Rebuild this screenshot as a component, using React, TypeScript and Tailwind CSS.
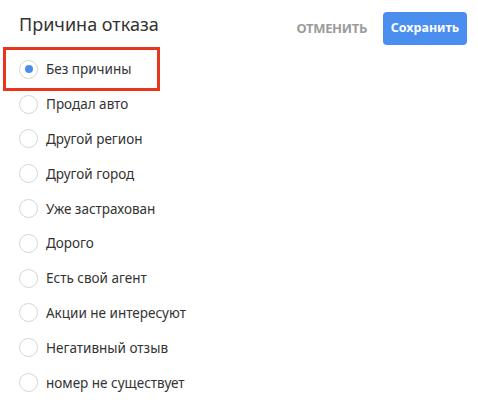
import React from 'react';

const reasons = [
    "Без причины",
    "Продал авто",
    "Другой регион",
    "Другой город",
    "Уже застрахован",
    "Дорого",
    "Есть свой агент",
    "Акции не интересуют",
    "Негативный отзыв",
    "номер не существует",
];

const App = () => {
    const [selected, setSelected] = React.useState(reasons[0]);

    return (
        <div className="w-[478px] h-[405px] bg-white overflow-hidden font-['Noto_Sans',sans-serif] text-[#333]">
            <div className="flex flex-row items-start justify-between pt-3 pl-[19px] pr-[11px] h-[52px]">
                <h1 className="text-[18px] leading-6 text-[#333]">Причина отказа</h1>
                <div className="flex flex-row items-center gap-4">
                    <button className="text-[13px] font-bold text-[#9b9b9b] uppercase tracking-tight">Отменить</button>
                    <button className="h-[33px] w-[84px] rounded bg-[#4a8ef0] text-white text-[12.5px] font-bold">Сохранить</button>
                </div>
            </div>

            <div className="relative flex flex-col">
                {reasons.map((r, i) => (
                    <div
                        key={r}
                        onClick={() => setSelected(r)}
                        className="relative flex flex-row items-center gap-[8px] pl-[19px] h-[34.8px] cursor-pointer"
                    >
                        {i === 0 && (
                            <div className="absolute left-[3px] top-[-5px] w-[157px] h-[44px] border-[3px] border-[#e8361e]" />
                        )}
                        <span className="flex items-center justify-center w-[19px] h-[19px] rounded-full border border-[#d6d6d6] bg-white">
                            {selected === r && <span className="w-[8px] h-[8px] rounded-full bg-[#4a8ef0]" />}
                        </span>
                        <span className="text-[13.5px] leading-5 text-[#333]">{r}</span>
                    </div>
                ))}
            </div>
        </div>
    );
};

export default App;
